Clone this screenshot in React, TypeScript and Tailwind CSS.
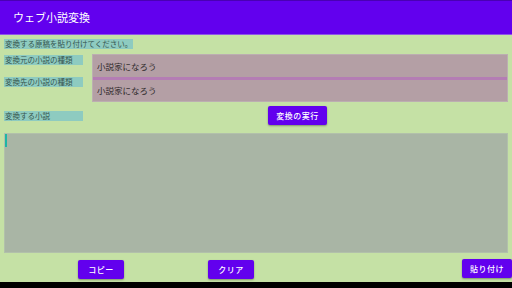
import React from "react";

const font = { fontFamily: '"Noto Sans CJK JP", "Noto Sans", sans-serif' };

function Label({ text, className = "" }: { text: string; className?: string }) {
  return (
    <div
      className={`h-[10px] bg-[#8ecbc0] pl-[1px] text-[7.5px] leading-[10px] text-[#35554f] whitespace-nowrap overflow-hidden ${className}`}
    >
      {text}
    </div>
  );
}

function Btn({ text, className = "" }: { text: string; className?: string }) {
  return (
    <div
      className={`flex items-center justify-center bg-[#6200ee] text-white text-[8px] font-medium tracking-[0.5px] rounded-[2px] shadow-[0_1px_2px_rgba(0,0,0,0.35)] ${className}`}
    >
      {text}
    </div>
  );
}

export default function App() {
  return (
    <div className="w-[512px] h-[288px] flex flex-col bg-black overflow-hidden" style={font}>
      <div className="h-[35px] shrink-0 bg-[#6200ee] border-t border-t-[#4a00b4] border-b border-b-[#8f55e6] flex items-center pl-[13px]">
        <span className="text-white text-[11px] leading-none">ウェブ小説変換</span>
      </div>
      <div className="h-[247px] shrink-0 bg-[#c5e1a5] flex flex-col">
        <Label text="変換する原稿を貼り付けてください。" className="mt-[4px] ml-[4px] w-[129px]" />
        <div className="flex mt-[5px]">
          <div className="flex flex-col w-[79px] ml-[4px] pt-[1px]">
            <Label text="変換元の小説の種類" />
            <Label text="変換先の小説の種類" className="mt-[12px]" />
          </div>
          <div className="ml-[9px] w-[416px] flex flex-col border border-[#bcaeb1] bg-[#b49fa5]">
            <div className="h-[22px] flex items-center pl-[4px] pt-[1px] text-[8.5px] text-[#2f2a2b]">
              小説家になろう
            </div>
            <div className="h-[3px] bg-[#b47db4]" />
            <div className="h-[21px] flex items-center pl-[4px] text-[8.5px] text-[#2f2a2b]">
              小説家になろう
            </div>
          </div>
        </div>
        <div className="flex items-center mt-[4px]">
          <Label text="変換する小説" className="ml-[4px] w-[79px]" />
          <Btn text="変換の実行" className="ml-[185px] w-[59px] h-[19px]" />
        </div>
        <div className="mt-[8px] ml-[4px] w-[504px] h-[120px] bg-[#a9b5a5] border border-[#b2c0ab] relative">
          <div className="absolute left-[0px] top-[0px] w-[1.5px] h-[13px] bg-[#1fb5a6]" />
        </div>
        <div className="flex mt-[6px] items-start">
          <Btn text="コピー" className="ml-[78px] w-[46px] h-[19px] mt-[1px]" />
          <Btn text="クリア" className="ml-[84px] w-[46px] h-[19px] mt-[1px]" />
          <Btn text="貼り付け" className="ml-[208px] w-[50px] h-[19px]" />
        </div>
      </div>
    </div>
  );
}
